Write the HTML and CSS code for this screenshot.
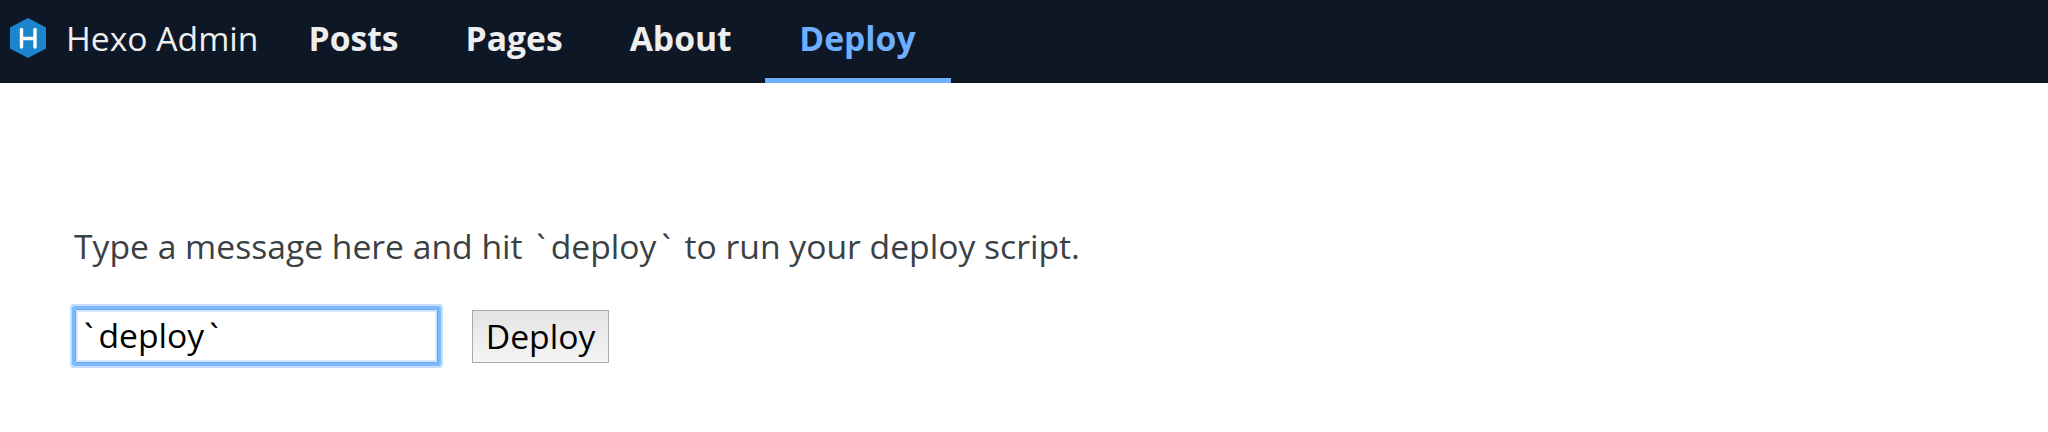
FILE: index.html
```html
<!DOCTYPE html>
<html lang="en">
<head>
<meta charset="utf-8">
<title>Hexo Admin</title>
<link rel="stylesheet" href="styles.css">
</head>
<body>
<header class="app-header">
  <svg class="logo" viewBox="0 0 38 42"><path class="logo-shape" d="M19 1 37 10.500V31.500L19 41 1 31.500V10.500Z"/><path class="logo-mark" d="M12.500 12.500V30M26 12.500V30M12.500 21.500H26"/></svg>
  <span class="title">Hexo Admin</span>
  <nav class="nav">
    <a class="nav-link">Posts</a>
    <a class="nav-link">Pages</a>
    <a class="nav-link">About</a>
    <a class="nav-link active">Deploy</a>
  </nav>
</header>
<main class="deploy">
  <p class="hint">Type a message here and hit <span class="tick">`</span>deploy<span class="tick">`</span> to run your deploy script.</p>
  <form class="deploy-form">
    <div class="message" role="textbox" contenteditable="true"><span class="tick">`</span>deploy<span class="tick">`</span></div>
    <button class="submit" type="button">Deploy</button>
  </form>
</main>
</body>
</html>
```

FILE: styles.css
```css
* { box-sizing: border-box; }
body { min-height: 432px; margin: 0; background: #fff; font-family: "Open Sans", sans-serif; font-size: 33.66px; }
.app-header { display: flex; align-items: flex-start; height: 83px; padding-left: 9px; background: #0e1726; color: #eee; line-height: 76px; }
.logo { width: 38px; height: 42px; margin-top: 17px; }
.logo-shape { fill: #1b86cf; }
.logo-mark { fill: none; stroke: #fff; stroke-width: 3.4; stroke-linecap: round; }
.title { width: 228px; padding-left: 19px; white-space: nowrap; }
.nav { display: flex; }
.nav-link { height: 83px; padding: 0 33.5px; font-weight: 700; }
.active { padding-left: 34px; padding-right: 35px; color: #6eafff; border-bottom: 5px solid #6eafff; }
.tick { display: inline-block; width: 0.577em; text-align: center; }
.deploy { min-height: 349px; padding: 139px 74px 0; }
.hint { margin: 0; color: #3a4145; line-height: 48px; white-space: nowrap; }
.deploy-form { display: flex; align-items: flex-start; margin-top: 40px; }
.message { width: 363px; height: 54px; margin-top: -1px; margin-left: 1px; padding: 0 3px; border: 1px solid #69a5ea; border-radius: 1px; outline: 0; box-shadow: inset 0 0 0 2px #d4e8ff, 0 0 0 3px #80b8fc, 0 0 0 5px #c5e0ff; color: #000; line-height: 51px; white-space: nowrap; }
.submit { width: 137px; height: 53px; margin-left: 34px; padding: 0 0 2px; border: 1px solid #aaa; background: linear-gradient(#e3e3e3, #f5f5f5); color: #000; font: inherit; line-height: 48px; }
```
